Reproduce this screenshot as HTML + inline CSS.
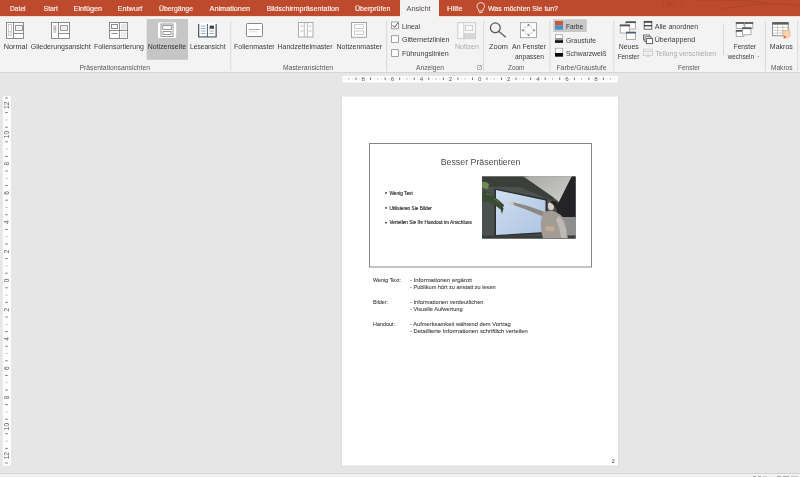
<!DOCTYPE html>
<html><head><meta charset="utf-8"><title>PowerPoint Notizenseite</title>
<style>
html,body{margin:0;padding:0;width:800px;height:477px;overflow:hidden;background:#e6e6e6}
svg{display:block;will-change:transform;font-family:"Liberation Sans",sans-serif}
</style></head>
<body>
<svg width="800" height="477" viewBox="0 0 800 477">
<rect x="0" y="0" width="800" height="477" fill="#e6e6e6"/>
<rect x="0" y="0" width="800" height="16.5" fill="#bd4a2c"/>
<g fill="none" stroke="#a53f22" stroke-width="1" opacity="0.55" stroke-linecap="round"><path d="M663.5,0 Q660.5,4 663,8.5"/><path d="M680.5,0 Q684,4 681,8.5"/><path d="M667.5,0.5 L667.5,7.5 M667.5,4 L675,0.5 M669.5,3.5 L676,7.5"/><path d="M722,8.5 Q735,7 748,5 Q770,3 790,4.5 Q796,6 800,5"/><path d="M696,0.8 L745,0.6 Q762,2 770,4"/></g>
<rect x="0" y="16.5" width="800" height="56" fill="#f3f3f3"/>
<rect x="0" y="16.5" width="800" height="1.3" fill="#faf0ed"/>
<rect x="0" y="72" width="800" height="1" fill="#d6d6d6"/>
<rect x="400" y="0" width="39" height="17" fill="#f3f3f3"/>
<text x="10" y="11" font-size="7.4" fill="#fff2ee" stroke="#fff2ee" stroke-width="0.15" textLength="15.6" lengthAdjust="spacingAndGlyphs">Datei</text>
<text x="43.6" y="11" font-size="7.4" fill="#fff2ee" stroke="#fff2ee" stroke-width="0.15" textLength="14.4" lengthAdjust="spacingAndGlyphs">Start</text>
<text x="73.6" y="11" font-size="7.4" fill="#fff2ee" stroke="#fff2ee" stroke-width="0.15" textLength="28.4" lengthAdjust="spacingAndGlyphs">Einfügen</text>
<text x="117.6" y="11" font-size="7.4" fill="#fff2ee" stroke="#fff2ee" stroke-width="0.15" textLength="24.8" lengthAdjust="spacingAndGlyphs">Entwurf</text>
<text x="159" y="11" font-size="7.4" fill="#fff2ee" stroke="#fff2ee" stroke-width="0.15" textLength="34.0" lengthAdjust="spacingAndGlyphs">Übergänge</text>
<text x="209.6" y="11" font-size="7.4" fill="#fff2ee" stroke="#fff2ee" stroke-width="0.15" textLength="40.4" lengthAdjust="spacingAndGlyphs">Animationen</text>
<text x="266.4" y="11" font-size="7.4" fill="#fff2ee" stroke="#fff2ee" stroke-width="0.15" textLength="72.6" lengthAdjust="spacingAndGlyphs">Bildschirmpräsentation</text>
<text x="355" y="11" font-size="7.4" fill="#fff2ee" stroke="#fff2ee" stroke-width="0.15" textLength="35.4" lengthAdjust="spacingAndGlyphs">Überprüfen</text>
<text x="447" y="11" font-size="7.4" fill="#fff2ee" stroke="#fff2ee" stroke-width="0.15" textLength="15.5" lengthAdjust="spacingAndGlyphs">Hilfe</text>
<text x="488" y="11" font-size="7.4" fill="#fff2ee" stroke="#fff2ee" stroke-width="0.15" textLength="70.0" lengthAdjust="spacingAndGlyphs">Was möchten Sie tun?</text>
<text x="406.6" y="11" font-size="7.4" fill="#6b5e5a" stroke="#6b5e5a" stroke-width="0.1" textLength="24.0" lengthAdjust="spacingAndGlyphs">Ansicht</text>
<g fill="none" stroke="#fbe8e2" stroke-width="0.9"><path d="M478.5,9.5 Q476.5,7.5 477,5.2 Q477.8,2.6 480.8,2.6 Q483.8,2.6 484.5,5.2 Q485,7.5 483,9.5 L483,11 L478.5,11 Z"/><path d="M479,12.6 L482.5,12.6"/></g>
<text x="3.75" y="48.75" font-size="7.5" fill="#3b3b3b" textLength="23.5" lengthAdjust="spacingAndGlyphs">Normal</text>
<text x="30.7" y="48.75" font-size="7.5" fill="#3b3b3b" textLength="60.0" lengthAdjust="spacingAndGlyphs">Gliederungsansicht</text>
<text x="93.9" y="48.75" font-size="7.5" fill="#3b3b3b" textLength="50.1" lengthAdjust="spacingAndGlyphs">Foliensortierung</text>
<text x="190" y="48.75" font-size="7.5" fill="#3b3b3b" textLength="35.5" lengthAdjust="spacingAndGlyphs">Leseansicht</text>
<text x="234" y="48.75" font-size="7.5" fill="#3b3b3b" textLength="40.7" lengthAdjust="spacingAndGlyphs">Folienmaster</text>
<text x="277.4" y="48.75" font-size="7.5" fill="#3b3b3b" textLength="55.2" lengthAdjust="spacingAndGlyphs">Handzettelmaster</text>
<text x="336.4" y="48.75" font-size="7.5" fill="#3b3b3b" textLength="45.6" lengthAdjust="spacingAndGlyphs">Notizenmaster</text>
<rect x="146.7" y="19" width="41.3" height="40.8" fill="#c6c6c6"/>
<text x="147.8" y="48.75" font-size="7.5" fill="#303030" textLength="38.2" lengthAdjust="spacingAndGlyphs">Notizenseite</text>
<text x="79.5" y="70" font-size="7.2" fill="#595959" textLength="70.5" lengthAdjust="spacingAndGlyphs">Präsentationsansichten</text>
<text x="283" y="70" font-size="7.2" fill="#595959" textLength="50.0" lengthAdjust="spacingAndGlyphs">Masteransichten</text>
<text x="416" y="70" font-size="7.2" fill="#595959" textLength="28.0" lengthAdjust="spacingAndGlyphs">Anzeigen</text>
<text x="508" y="70" font-size="7.2" fill="#595959" textLength="16.5" lengthAdjust="spacingAndGlyphs">Zoom</text>
<text x="556.4" y="70" font-size="7.2" fill="#595959" textLength="50.1" lengthAdjust="spacingAndGlyphs">Farbe/Graustufe</text>
<text x="678" y="70" font-size="7.2" fill="#595959" textLength="22.0" lengthAdjust="spacingAndGlyphs">Fenster</text>
<text x="771" y="70" font-size="7.2" fill="#595959" textLength="21.5" lengthAdjust="spacingAndGlyphs">Makros</text>
<rect x="230.3" y="21" width="1" height="50" fill="#dadada"/>
<rect x="386.1" y="21" width="1" height="50" fill="#dadada"/>
<rect x="483.1" y="21" width="1" height="50" fill="#dadada"/>
<rect x="549.5" y="21" width="1" height="50" fill="#dadada"/>
<rect x="613.3" y="21" width="1" height="50" fill="#dadada"/>
<rect x="764.9" y="21" width="1" height="50" fill="#dadada"/>
<rect x="797.2" y="21" width="1" height="50" fill="#dadada"/>
<rect x="723.1" y="24" width="1" height="32" fill="#dadada"/>
<path d="M477.5,65.5 h4 v4 h-4 z M479,68 l2,-2" fill="none" stroke="#8a8a8a" stroke-width="0.6"/>
<rect x="391.6" y="22.0" width="6.8" height="6.8" fill="#fff" stroke="#8c8c8c" stroke-width="0.8"/>
<rect x="391.6" y="35.699999999999996" width="6.8" height="6.8" fill="#fff" stroke="#8c8c8c" stroke-width="0.8"/>
<rect x="391.6" y="49.699999999999996" width="6.8" height="6.8" fill="#fff" stroke="#8c8c8c" stroke-width="0.8"/>
<text x="402" y="28.9" font-size="7.5" fill="#3b3b3b" textLength="18.0" lengthAdjust="spacingAndGlyphs">Lineal</text>
<text x="402" y="42.4" font-size="7.5" fill="#3b3b3b" textLength="47.4" lengthAdjust="spacingAndGlyphs">Gitternetzlinien</text>
<text x="402" y="56" font-size="7.5" fill="#3b3b3b" textLength="46.6" lengthAdjust="spacingAndGlyphs">Führungslinien</text>
<path d="M392.6,25.2 L394.6,27.4 L398,22.8" fill="none" stroke="#3a3a3a" stroke-width="0.9"/>
<text x="455" y="48.75" font-size="7.5" fill="#ababab" textLength="24.0" lengthAdjust="spacingAndGlyphs">Notizen</text>
<text x="489" y="48.75" font-size="7.5" fill="#3b3b3b" textLength="19.0" lengthAdjust="spacingAndGlyphs">Zoom</text>
<text x="512" y="48.75" font-size="7.5" fill="#3b3b3b" textLength="34.0" lengthAdjust="spacingAndGlyphs">An Fenster</text>
<text x="515" y="58.6" font-size="7.5" fill="#3b3b3b" textLength="29.0" lengthAdjust="spacingAndGlyphs">anpassen</text>
<rect x="553.3" y="19.3" width="33.5" height="12.7" fill="#c8c8c8"/>
<text x="566" y="28.8" font-size="7.5" fill="#303030" textLength="17.0" lengthAdjust="spacingAndGlyphs">Farbe</text>
<text x="566" y="42.5" font-size="7.5" fill="#3b3b3b" textLength="30.0" lengthAdjust="spacingAndGlyphs">Graustufe</text>
<text x="566" y="56" font-size="7.5" fill="#3b3b3b" textLength="40.5" lengthAdjust="spacingAndGlyphs">Schwarzweiß</text>
<text x="618.7" y="48.75" font-size="7.5" fill="#3b3b3b" textLength="20.0" lengthAdjust="spacingAndGlyphs">Neues</text>
<text x="617.7" y="58.6" font-size="7.5" fill="#3b3b3b" textLength="21.6" lengthAdjust="spacingAndGlyphs">Fenster</text>
<text x="654.7" y="28.8" font-size="7.5" fill="#3b3b3b" textLength="43.5" lengthAdjust="spacingAndGlyphs">Alle anordnen</text>
<text x="654.7" y="42" font-size="7.5" fill="#3b3b3b" textLength="40.5" lengthAdjust="spacingAndGlyphs">Überlappend</text>
<text x="655.5" y="55.8" font-size="7.5" fill="#ababab" textLength="60.5" lengthAdjust="spacingAndGlyphs">Teilung verschieben</text>
<text x="733.7" y="48.75" font-size="7.5" fill="#3b3b3b" textLength="22.3" lengthAdjust="spacingAndGlyphs">Fenster</text>
<text x="727.7" y="58.6" font-size="7.5" fill="#3b3b3b" textLength="26.3" lengthAdjust="spacingAndGlyphs">wechseln</text>
<path d="M757.5,56.2 l1.6,0 l-0.8,1 z" fill="#555"/>
<text x="769.8" y="48.75" font-size="7.5" fill="#3b3b3b" textLength="23.0" lengthAdjust="spacingAndGlyphs">Makros</text>
<rect x="6.5" y="22.5" width="17" height="16" fill="#fff"/>
<g fill="none" stroke="#808080" stroke-width="0.9"><rect x="6.5" y="22.5" width="17" height="16"/><path d="M13.5,22.5 V38.5 M13.5,33.5 H23.5"/><rect x="15.6" y="25.4" width="6.8" height="5"/></g>
<g fill="none" stroke="#b4b4b4" stroke-width="0.7"><rect x="8.3" y="24.5" width="3.2" height="6.8"/><rect x="8.3" y="32.9" width="3.2" height="2.6"/></g>
<g fill="none" stroke="#c8c8c8" stroke-width="0.7"><path d="M17,28 h4"/></g>
<rect x="51.5" y="22.5" width="18" height="16" fill="#fff"/>
<g fill="none" stroke="#808080" stroke-width="0.9"><rect x="51.5" y="22.5" width="18" height="16"/><path d="M58.5,22.5 V38.5 M58.5,33.5 H69.5"/><rect x="60.6" y="25.6" width="6.8" height="4.8"/></g>
<rect x="53.3" y="25" width="3.2" height="8" fill="#d0d0d0"/><rect x="53.8" y="27" width="2.2" height="3" fill="#b8b8b8"/>
<g fill="none" stroke="#c8c8c8" stroke-width="0.7"><path d="M62,28 h4"/></g>
<rect x="109.5" y="22.5" width="18" height="16" fill="#fff"/>
<g fill="none" stroke="#808080" stroke-width="0.9"><rect x="109.5" y="22.5" width="18" height="16"/><path d="M119.5,22.5 V38.5 M109.5,30.5 H127.5"/><rect x="111.5" y="24.5" width="6" height="4"/><path d="M111.5,33.5 h6"/></g>
<rect x="121" y="24" width="5.5" height="5.5" fill="#e6e6e6"/><rect x="121" y="32" width="5.5" height="5.5" fill="#ececec"/>
<rect x="158" y="22.5" width="18.2" height="15.5" fill="#fff"/>
<g fill="none" stroke="#808080" stroke-width="0.8"><rect x="161" y="24" width="12" height="12.5"/><rect x="162.8" y="25.5" width="8.5" height="4"/><rect x="163" y="31.5" width="8" height="3"/></g>
<path d="M198,24 H216.8 V37.5 H198 Z" fill="#4f6072"/>
<rect x="199.3" y="23" width="7.6" height="13.3" fill="#fff"/><rect x="207.9" y="23" width="7.6" height="13.3" fill="#fff"/>
<g fill="none" stroke="#8a97a5" stroke-width="0.8"><path d="M200.8,26 h4.8 M200.8,28.5 h4.8 M200.8,31 h4.8 M200.8,33.5 h4.8 M209.3,31 h4.8 M209.3,33.5 h4.8"/></g>
<rect x="209.6" y="25.6" width="4.4" height="3.2" fill="#3d4652"/>
<rect x="246.5" y="23.5" width="16" height="13" rx="1" fill="#fff" stroke="#7a7a7a" stroke-width="0.9"/>
<g fill="none" stroke="#888" stroke-width="0.7"><path d="M249,29.5 h11"/></g>
<g fill="none" stroke="#c8c8c8" stroke-width="0.7"><path d="M249.5,31.8 h8"/></g>
<rect x="298.5" y="22.5" width="14.5" height="14.5" fill="#fff" stroke="#9a9a9a" stroke-width="0.8"/>
<g fill="none" stroke="#a8a8a8" stroke-width="0.8"><path d="M304.3,22.5 V37 M307.3,22.5 V37"/><path d="M300.5,26 h3 M300.5,31 h3 M308.5,26 h3 M308.5,31 h3"/></g>
<rect x="351.5" y="22.5" width="15" height="14.8" fill="#fff" stroke="#9a9a9a" stroke-width="0.9"/>
<g fill="none" stroke="#b9b9b9" stroke-width="0.7"><rect x="354.5" y="24.7" width="9" height="3.8"/><rect x="354.5" y="31" width="9" height="3.4"/></g>
<rect x="457.8" y="22.7" width="17.6" height="16" fill="#fafafa" stroke="#c4c4c4" stroke-width="0.8"/>
<rect x="464" y="33" width="11.4" height="5.7" fill="#d6d6d6"/>
<g fill="none" stroke="#c0c0c0" stroke-width="0.8"><rect x="465.5" y="25.3" width="7.3" height="5"/><path d="M463.8,22.7 V38.7"/></g>
<g fill="none" stroke="#5a5a5a" stroke-width="1.3"><circle cx="495.3" cy="27.8" r="4.9"/><path d="M499,31.6 L505.8,37.2"/></g>
<rect x="520.5" y="22.7" width="16" height="15" fill="#fff" stroke="#969696" stroke-width="0.8"/>
<g fill="none" stroke="#a5a5a5" stroke-width="0.7"><rect x="525" y="27" width="7" height="6.5" stroke-dasharray="1 1"/></g>
<path d="M528.5,23.8 l-1.5,2 h3 z M528.5,36.6 l-1.5,-2 h3 z M521.6,30.2 l2,-1.5 v3 z M535.4,30.2 l-2,-1.5 v3 z" fill="#6a6a6a"/>
<rect x="555" y="21" width="8" height="4.3" fill="#c9583a"/><rect x="555" y="25.3" width="8" height="4.4" fill="#4a90c2"/>
<rect x="555.4" y="34.8" width="7.4" height="7.8" fill="#fff" stroke="#8a8a8a" stroke-width="0.6"/><rect x="555" y="38" width="8" height="2" fill="#9a9a9a"/><rect x="555" y="40.2" width="8" height="2.6" fill="#111"/>
<rect x="555.4" y="48.2" width="7.4" height="8" fill="#fff" stroke="#8a8a8a" stroke-width="0.6"/><rect x="555" y="53" width="8" height="3.6" fill="#0a0a0a"/>
<rect x="626" y="21.8" width="9.5" height="7.2" fill="#fff" stroke="#8c8c8c" stroke-width="0.7"/><rect x="625.65" y="21.400000000000002" width="10.2" height="1.7" fill="#505050"/>
<rect x="620.2" y="25" width="9.5" height="8" fill="#fff" stroke="#8c8c8c" stroke-width="0.7"/><rect x="619.85" y="24.6" width="10.2" height="1.7" fill="#505050"/>
<rect x="626.5" y="32.2" width="9" height="7.2" fill="#fff" stroke="#8c8c8c" stroke-width="0.7"/><rect x="626.15" y="31.800000000000004" width="9.7" height="1.7" fill="#4c5d70"/>
<rect x="644.2" y="21.4" width="7.6" height="7.8" fill="#fff" stroke="#555" stroke-width="0.9"/><rect x="644" y="21.2" width="8" height="1.6" fill="#444"/><rect x="644" y="25" width="8" height="1.4" fill="#444"/>
<rect x="643.4" y="35" width="6" height="5" fill="none" stroke="#555" stroke-width="0.8"/><rect x="645" y="36.8" width="6" height="5" fill="#fff" stroke="#555" stroke-width="0.8"/><rect x="646.6" y="38.6" width="6" height="5" fill="#fff" stroke="#555" stroke-width="0.9"/>
<g fill="none" stroke="#c8c8c8" stroke-width="0.8"><rect x="643.6" y="49.2" width="9" height="6.5"/><path d="M643.6,51.5 h9 M648,53 v4 M646.5,55.5 l1.5,1.5 l1.5,-1.5"/></g>
<rect x="736.2" y="22.6" width="7.8" height="5.8" fill="#fff" stroke="#8c8c8c" stroke-width="0.7"/><rect x="735.85" y="22.200000000000003" width="8.5" height="1.7" fill="#555"/>
<rect x="745" y="22.6" width="7.8" height="5.8" fill="#fff" stroke="#8c8c8c" stroke-width="0.7"/><rect x="744.65" y="22.200000000000003" width="8.5" height="1.7" fill="#555"/>
<rect x="736.2" y="30.4" width="7.8" height="6.2" fill="#fff" stroke="#8c8c8c" stroke-width="0.7"/><rect x="735.85" y="30.0" width="8.5" height="1.7" fill="#555"/>
<rect x="742.4" y="27.8" width="8.6" height="7" fill="#fff" stroke="#8c8c8c" stroke-width="0.7"/><rect x="742.05" y="27.400000000000002" width="9.299999999999999" height="1.7" fill="#4c5d70"/>
<rect x="772.6" y="22.4" width="15.6" height="13.4" fill="#fff" stroke="#777" stroke-width="0.8"/><rect x="772.4" y="22.2" width="16" height="2.4" fill="#5d5d5d"/>
<g fill="none" stroke="#b0b0b0" stroke-width="0.6"><path d="M772.6,27.5 h15.6 M772.6,30.3 h15.6 M772.6,33 h15.6 M777.5,24.6 v11.2 M782.8,24.6 v11.2"/></g>
<path d="M782.4,31 L789.8,30.2 L790.2,36 Q787,39 784,38.2 Z" fill="#f6d5b0" stroke="#e8a070" stroke-width="0.5"/><circle cx="784.8" cy="37" r="1.2" fill="#e07040"/>
<rect x="342.5" y="75.9" width="275.5" height="6.6" fill="#fdfdfd"/>
<rect x="348.35" y="77.8" width="0.8" height="2.2" fill="#b4b4b4"/><rect x="355.57" y="77.4" width="0.9" height="2.7" fill="#6a6a6a"/><text x="363.30" y="81.4" font-size="6.2" fill="#5a5a5a" text-anchor="middle">8</text><rect x="370.12" y="77.4" width="0.9" height="2.7" fill="#6a6a6a"/><rect x="377.45" y="77.8" width="0.8" height="2.2" fill="#b4b4b4"/><rect x="384.68" y="77.4" width="0.9" height="2.7" fill="#6a6a6a"/><text x="392.40" y="81.4" font-size="6.2" fill="#5a5a5a" text-anchor="middle">6</text><rect x="399.22" y="77.4" width="0.9" height="2.7" fill="#6a6a6a"/><rect x="406.55" y="77.8" width="0.8" height="2.2" fill="#b4b4b4"/><rect x="413.77" y="77.4" width="0.9" height="2.7" fill="#6a6a6a"/><text x="421.50" y="81.4" font-size="6.2" fill="#5a5a5a" text-anchor="middle">4</text><rect x="428.32" y="77.4" width="0.9" height="2.7" fill="#6a6a6a"/><rect x="435.65" y="77.8" width="0.8" height="2.2" fill="#b4b4b4"/><rect x="442.88" y="77.4" width="0.9" height="2.7" fill="#6a6a6a"/><text x="450.60" y="81.4" font-size="6.2" fill="#5a5a5a" text-anchor="middle">2</text><rect x="457.43" y="77.4" width="0.9" height="2.7" fill="#6a6a6a"/><rect x="464.75" y="77.8" width="0.8" height="2.2" fill="#b4b4b4"/><rect x="471.98" y="77.4" width="0.9" height="2.7" fill="#6a6a6a"/><text x="479.70" y="81.4" font-size="6.2" fill="#5a5a5a" text-anchor="middle">0</text><rect x="486.52" y="77.4" width="0.9" height="2.7" fill="#6a6a6a"/><rect x="493.85" y="77.8" width="0.8" height="2.2" fill="#b4b4b4"/><rect x="501.07" y="77.4" width="0.9" height="2.7" fill="#6a6a6a"/><text x="508.80" y="81.4" font-size="6.2" fill="#5a5a5a" text-anchor="middle">2</text><rect x="515.62" y="77.4" width="0.9" height="2.7" fill="#6a6a6a"/><rect x="522.95" y="77.8" width="0.8" height="2.2" fill="#b4b4b4"/><rect x="530.17" y="77.4" width="0.9" height="2.7" fill="#6a6a6a"/><text x="537.90" y="81.4" font-size="6.2" fill="#5a5a5a" text-anchor="middle">4</text><rect x="544.72" y="77.4" width="0.9" height="2.7" fill="#6a6a6a"/><rect x="552.05" y="77.8" width="0.8" height="2.2" fill="#b4b4b4"/><rect x="559.27" y="77.4" width="0.9" height="2.7" fill="#6a6a6a"/><text x="567.00" y="81.4" font-size="6.2" fill="#5a5a5a" text-anchor="middle">6</text><rect x="573.82" y="77.4" width="0.9" height="2.7" fill="#6a6a6a"/><rect x="581.15" y="77.8" width="0.8" height="2.2" fill="#b4b4b4"/><rect x="588.38" y="77.4" width="0.9" height="2.7" fill="#6a6a6a"/><text x="596.10" y="81.4" font-size="6.2" fill="#5a5a5a" text-anchor="middle">8</text><rect x="602.92" y="77.4" width="0.9" height="2.7" fill="#6a6a6a"/><rect x="610.25" y="77.8" width="0.8" height="2.2" fill="#b4b4b4"/><rect x="344.81" y="78.4" width="0.6" height="1" fill="#c0c0c0"/><rect x="352.09" y="78.4" width="0.6" height="1" fill="#c0c0c0"/><rect x="359.36" y="78.4" width="0.6" height="1" fill="#c0c0c0"/><rect x="366.64" y="78.4" width="0.6" height="1" fill="#c0c0c0"/><rect x="373.91" y="78.4" width="0.6" height="1" fill="#c0c0c0"/><rect x="381.19" y="78.4" width="0.6" height="1" fill="#c0c0c0"/><rect x="388.46" y="78.4" width="0.6" height="1" fill="#c0c0c0"/><rect x="395.74" y="78.4" width="0.6" height="1" fill="#c0c0c0"/><rect x="403.01" y="78.4" width="0.6" height="1" fill="#c0c0c0"/><rect x="410.29" y="78.4" width="0.6" height="1" fill="#c0c0c0"/><rect x="417.56" y="78.4" width="0.6" height="1" fill="#c0c0c0"/><rect x="424.84" y="78.4" width="0.6" height="1" fill="#c0c0c0"/><rect x="432.11" y="78.4" width="0.6" height="1" fill="#c0c0c0"/><rect x="439.39" y="78.4" width="0.6" height="1" fill="#c0c0c0"/><rect x="446.66" y="78.4" width="0.6" height="1" fill="#c0c0c0"/><rect x="453.94" y="78.4" width="0.6" height="1" fill="#c0c0c0"/><rect x="461.21" y="78.4" width="0.6" height="1" fill="#c0c0c0"/><rect x="468.49" y="78.4" width="0.6" height="1" fill="#c0c0c0"/><rect x="475.76" y="78.4" width="0.6" height="1" fill="#c0c0c0"/><rect x="483.04" y="78.4" width="0.6" height="1" fill="#c0c0c0"/><rect x="490.31" y="78.4" width="0.6" height="1" fill="#c0c0c0"/><rect x="497.59" y="78.4" width="0.6" height="1" fill="#c0c0c0"/><rect x="504.86" y="78.4" width="0.6" height="1" fill="#c0c0c0"/><rect x="512.14" y="78.4" width="0.6" height="1" fill="#c0c0c0"/><rect x="519.41" y="78.4" width="0.6" height="1" fill="#c0c0c0"/><rect x="526.69" y="78.4" width="0.6" height="1" fill="#c0c0c0"/><rect x="533.96" y="78.4" width="0.6" height="1" fill="#c0c0c0"/><rect x="541.24" y="78.4" width="0.6" height="1" fill="#c0c0c0"/><rect x="548.51" y="78.4" width="0.6" height="1" fill="#c0c0c0"/><rect x="555.79" y="78.4" width="0.6" height="1" fill="#c0c0c0"/><rect x="563.06" y="78.4" width="0.6" height="1" fill="#c0c0c0"/><rect x="570.34" y="78.4" width="0.6" height="1" fill="#c0c0c0"/><rect x="577.61" y="78.4" width="0.6" height="1" fill="#c0c0c0"/><rect x="584.89" y="78.4" width="0.6" height="1" fill="#c0c0c0"/><rect x="592.16" y="78.4" width="0.6" height="1" fill="#c0c0c0"/><rect x="599.44" y="78.4" width="0.6" height="1" fill="#c0c0c0"/><rect x="606.71" y="78.4" width="0.6" height="1" fill="#c0c0c0"/><rect x="613.99" y="78.4" width="0.6" height="1" fill="#c0c0c0"/>
<rect x="2.8" y="96.2" width="8.2" height="369.5" fill="#fdfdfd"/>
<rect x="5.2" y="97.55" width="2.6" height="0.9" fill="#727272"/><text x="0" y="0" font-size="6.6" fill="#555" text-anchor="middle" transform="translate(9.2,105.30) rotate(-90)">12</text><rect x="5.2" y="112.15" width="2.6" height="0.9" fill="#727272"/><rect x="5.4" y="119.50" width="2.2" height="0.8" fill="#b4b4b4"/><rect x="5.2" y="126.75" width="2.6" height="0.9" fill="#727272"/><text x="0" y="0" font-size="6.6" fill="#555" text-anchor="middle" transform="translate(9.2,134.50) rotate(-90)">10</text><rect x="5.2" y="141.35" width="2.6" height="0.9" fill="#727272"/><rect x="5.4" y="148.70" width="2.2" height="0.8" fill="#b4b4b4"/><rect x="5.2" y="155.95" width="2.6" height="0.9" fill="#727272"/><text x="0" y="0" font-size="6.6" fill="#555" text-anchor="middle" transform="translate(9.2,163.70) rotate(-90)">8</text><rect x="5.2" y="170.55" width="2.6" height="0.9" fill="#727272"/><rect x="5.4" y="177.90" width="2.2" height="0.8" fill="#b4b4b4"/><rect x="5.2" y="185.15" width="2.6" height="0.9" fill="#727272"/><text x="0" y="0" font-size="6.6" fill="#555" text-anchor="middle" transform="translate(9.2,192.90) rotate(-90)">6</text><rect x="5.2" y="199.75" width="2.6" height="0.9" fill="#727272"/><rect x="5.4" y="207.10" width="2.2" height="0.8" fill="#b4b4b4"/><rect x="5.2" y="214.35" width="2.6" height="0.9" fill="#727272"/><text x="0" y="0" font-size="6.6" fill="#555" text-anchor="middle" transform="translate(9.2,222.10) rotate(-90)">4</text><rect x="5.2" y="228.95" width="2.6" height="0.9" fill="#727272"/><rect x="5.4" y="236.30" width="2.2" height="0.8" fill="#b4b4b4"/><rect x="5.2" y="243.55" width="2.6" height="0.9" fill="#727272"/><text x="0" y="0" font-size="6.6" fill="#555" text-anchor="middle" transform="translate(9.2,251.30) rotate(-90)">2</text><rect x="5.2" y="258.15" width="2.6" height="0.9" fill="#727272"/><rect x="5.4" y="265.50" width="2.2" height="0.8" fill="#b4b4b4"/><rect x="5.2" y="272.75" width="2.6" height="0.9" fill="#727272"/><text x="0" y="0" font-size="6.6" fill="#555" text-anchor="middle" transform="translate(9.2,280.50) rotate(-90)">0</text><rect x="5.2" y="287.35" width="2.6" height="0.9" fill="#727272"/><rect x="5.4" y="294.70" width="2.2" height="0.8" fill="#b4b4b4"/><rect x="5.2" y="301.95" width="2.6" height="0.9" fill="#727272"/><text x="0" y="0" font-size="6.6" fill="#555" text-anchor="middle" transform="translate(9.2,309.70) rotate(-90)">2</text><rect x="5.2" y="316.55" width="2.6" height="0.9" fill="#727272"/><rect x="5.4" y="323.90" width="2.2" height="0.8" fill="#b4b4b4"/><rect x="5.2" y="331.15" width="2.6" height="0.9" fill="#727272"/><text x="0" y="0" font-size="6.6" fill="#555" text-anchor="middle" transform="translate(9.2,338.90) rotate(-90)">4</text><rect x="5.2" y="345.75" width="2.6" height="0.9" fill="#727272"/><rect x="5.4" y="353.10" width="2.2" height="0.8" fill="#b4b4b4"/><rect x="5.2" y="360.35" width="2.6" height="0.9" fill="#727272"/><text x="0" y="0" font-size="6.6" fill="#555" text-anchor="middle" transform="translate(9.2,368.10) rotate(-90)">6</text><rect x="5.2" y="374.95" width="2.6" height="0.9" fill="#727272"/><rect x="5.4" y="382.30" width="2.2" height="0.8" fill="#b4b4b4"/><rect x="5.2" y="389.55" width="2.6" height="0.9" fill="#727272"/><text x="0" y="0" font-size="6.6" fill="#555" text-anchor="middle" transform="translate(9.2,397.30) rotate(-90)">8</text><rect x="5.2" y="404.15" width="2.6" height="0.9" fill="#727272"/><rect x="5.4" y="411.50" width="2.2" height="0.8" fill="#b4b4b4"/><rect x="5.2" y="418.75" width="2.6" height="0.9" fill="#727272"/><text x="0" y="0" font-size="6.6" fill="#555" text-anchor="middle" transform="translate(9.2,426.50) rotate(-90)">10</text><rect x="5.2" y="433.35" width="2.6" height="0.9" fill="#727272"/><rect x="5.4" y="440.70" width="2.2" height="0.8" fill="#b4b4b4"/><rect x="5.2" y="447.95" width="2.6" height="0.9" fill="#727272"/><text x="0" y="0" font-size="6.6" fill="#555" text-anchor="middle" transform="translate(9.2,455.70) rotate(-90)">12</text><rect x="5.2" y="462.55" width="2.6" height="0.9" fill="#727272"/>
<rect x="341" y="95.6" width="278" height="371.4" fill="#dedede"/>
<rect x="342" y="96.5" width="276" height="369.1" fill="#ffffff"/>
<rect x="369.5" y="143.5" width="222" height="123.5" fill="#fff" stroke="#7b7b7b" stroke-width="0.9"/>
<text x="440.7" y="164.6" font-size="9.9" fill="#4a4a4a" textLength="79.8" lengthAdjust="spacingAndGlyphs">Besser Präsentieren</text>
<circle cx="386" cy="192.9" r="0.9" fill="#303030"/>
<text x="389.4" y="194.6" font-size="4.6" fill="#303030" stroke="#303030" stroke-width="0.15" textLength="23.4" lengthAdjust="spacingAndGlyphs">Wenig Text</text>
<circle cx="386" cy="207.9" r="0.9" fill="#303030"/>
<text x="389.4" y="209.6" font-size="4.6" fill="#303030" stroke="#303030" stroke-width="0.15" textLength="42.5" lengthAdjust="spacingAndGlyphs">Utilisieren Sie Bilder</text>
<circle cx="386" cy="222.70000000000002" r="0.9" fill="#303030"/>
<text x="389.4" y="224.4" font-size="4.6" fill="#303030" stroke="#303030" stroke-width="0.15" textLength="82.5" lengthAdjust="spacingAndGlyphs">Verteilen Sie Ihr Handout im Anschluss</text>
<text x="373.1" y="281.8" font-size="5.6" fill="#474747" stroke="#474747" stroke-width="0.1" textLength="27.9" lengthAdjust="spacingAndGlyphs">Wenig Text:</text>
<text x="373.1" y="304.1" font-size="5.6" fill="#474747" stroke="#474747" stroke-width="0.1" textLength="14.9" lengthAdjust="spacingAndGlyphs">Bilder:</text>
<text x="373.1" y="325.8" font-size="5.6" fill="#474747" stroke="#474747" stroke-width="0.1" textLength="21.9" lengthAdjust="spacingAndGlyphs">Handout:</text>
<text x="410" y="281.8" font-size="5.6" fill="#474747" stroke="#474747" stroke-width="0.1" textLength="61.9" lengthAdjust="spacingAndGlyphs">- Informationen ergänzt</text>
<text x="410" y="288.8" font-size="5.6" fill="#474747" stroke="#474747" stroke-width="0.1" textLength="85.6" lengthAdjust="spacingAndGlyphs">- Publikum hört zu anstatt zu lesen</text>
<text x="410" y="304.1" font-size="5.6" fill="#474747" stroke="#474747" stroke-width="0.1" textLength="73.5" lengthAdjust="spacingAndGlyphs">- Informationen verdeutlichen</text>
<text x="410" y="310.5" font-size="5.6" fill="#474747" stroke="#474747" stroke-width="0.1" textLength="52.5" lengthAdjust="spacingAndGlyphs">- Visuelle Aufwertung</text>
<text x="410" y="325.8" font-size="5.6" fill="#474747" stroke="#474747" stroke-width="0.1" textLength="100.7" lengthAdjust="spacingAndGlyphs">- Aufmerksamkeit während dem Vortrag</text>
<text x="410" y="333.0" font-size="5.6" fill="#474747" stroke="#474747" stroke-width="0.1" textLength="117.8" lengthAdjust="spacingAndGlyphs">- Detaillierte Informationen schriftlich verteilen</text>
<text x="611.8" y="463" font-size="5" fill="#333" textLength="3.0" lengthAdjust="spacingAndGlyphs">2</text>
<rect x="0" y="473.5" width="800" height="3.5" fill="#f1f1f1"/><rect x="0" y="473" width="800" height="1" fill="#d4d4d4"/>
<g fill="#9a9a9a"><rect x="753" y="476.2" width="3" height="0.8"/><rect x="758" y="476.2" width="3" height="0.8"/><rect x="763" y="476.4" width="4" height="0.6" fill="#bbb"/><rect x="777" y="476.2" width="4" height="0.8"/><rect x="783" y="476.2" width="6" height="0.8"/><rect x="791" y="476.3" width="7" height="0.7" fill="#b5b5b5"/></g>
<defs>
<linearGradient id="scr" x1="0" y1="0" x2="1" y2="1"><stop offset="0" stop-color="#d0def0"/><stop offset="1" stop-color="#adc4e2"/></linearGradient>
<linearGradient id="ceil" x1="0" y1="0" x2="1" y2="1"><stop offset="0" stop-color="#a4a5a3"/><stop offset="1" stop-color="#cfcfcd"/></linearGradient>
<filter id="bl"><feGaussianBlur stdDeviation="0.8"/></filter>
<clipPath id="pc"><rect x="482" y="176.4" width="93.6" height="62"/></clipPath>
</defs>
<g clip-path="url(#pc)"><g>
<rect x="478" y="172" width="100" height="70" fill="#4b514d"/>
<path d="M478,172 H522 L553,194 L553,201 L520,187 L478,187 Z" fill="#3a3f3c"/>
<path d="M517,172 H574 L559,202 L553,197 Z" fill="url(#ceil)"/>
<path d="M574,172 H580 V218 H558 L556,207 L559,202 Z" fill="#242426"/>
<rect x="558" y="217" width="22" height="25" fill="#8f8f8f"/>
<path d="M494.5,188.5 L547,199 L547,233.5 L494.5,236.5 Z" fill="#2b2f31"/>
<path d="M496,190 L545.5,200.6 L545.5,232 L496,235 Z" fill="url(#scr)"/>
<path d="M478,235.6 H580 V242 H478 Z" fill="#3a3d3c"/>
<path d="M482,182 Q486,181 489,184 L488,189 Q484,189 482,187 Z" fill="#6f8a52"/>
<path d="M483,191 Q489,191 493,196 Q498,199 504,205 Q503,209 500,209 Q495,205 490,202 Q485,201 482,202 Z" fill="#3a4a33"/>
<path d="M486,194 q3,-1 5,2 M494,199 q3,0 5,4" stroke="#5d7a48" stroke-width="0.9" fill="none"/>
<path d="M500,207 l2,7 l1.5,-6 z" fill="#2f3f28"/>
<path d="M545,212 L528,206 L513,202.3 L512.2,204.6 L526,209.5 L544,217 Z" fill="#8d8782"/>
<path d="M514,203.6 Q510.5,201.5 508.5,202.5 Q511,205 514,205 Z" fill="#e0c2ae"/>
<path d="M543,213 Q548,210 553,211 Q561,213 565,221 L568,238.4 H543 Q540,228 541,220 Z" fill="#a39c95"/>
<path d="M559,216 Q564,221 566,229 L567,238 H561 Q560,228 556,220 Z" fill="#bdb9b5"/>
<ellipse cx="551" cy="206" rx="3.1" ry="4.2" fill="#d6d0ca"/>
<path d="M549.5,202.3 Q552.5,199.5 557,201.5 Q558.5,205 557.5,210 Q555,207 552,203.5 Z" fill="#2a2422"/>
<path d="M545,227 Q550,225 555,227.5 L554,231 Q548,232 545,230 Z" fill="#c2aa98"/>
</g></g>

</svg>
</body></html>
